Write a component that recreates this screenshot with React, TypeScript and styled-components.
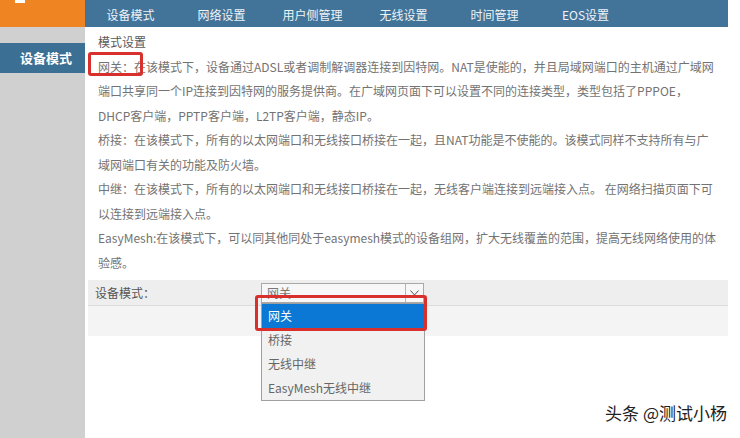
import styled, { createGlobalStyle } from 'styled-components';

const Global = createGlobalStyle`
  html, body {
    margin: 0;
    padding: 0;
    background: #fff;
  }
  body {
    font-family: "Noto Sans CJK SC", "Noto Sans", sans-serif;
  }
`;

const Page = styled.div`
  display: flex;
  height: 438px;
  overflow: hidden;
  position: relative;
  width: 740px;
`;

const Sidebar = styled.aside`
  background: #d0d0d0;
  display: flex;
  flex: 0 0 85px;
  flex-direction: column;
`;

const Logo = styled.div`
  background: #ef8522;
  height: 27px;
  position: relative;
`;

const LogoMark = styled.span`
  background: #fff;
  display: block;
  height: 3px;
  left: 15px;
  position: absolute;
  top: 0;
  width: 10px;
`;

const MenuItem = styled.div`
  background: #3c6f94;
  color: #fff;
  font-size: 13px;
  font-weight: 700;
  height: 30px;
  line-height: 30px;
  margin-top: 16px;
  padding-right: 13px;
  text-align: right;
`;

const Main = styled.main`
  display: flex;
  flex: 1;
  flex-direction: column;
`;

const NavBar = styled.nav`
  background: #42749a;
  display: flex;
  height: 27px;
  width: 643px;
`;

const Tab = styled.div`
  color: #eef3f7;
  flex: 0 0 91px;
  font-size: 12px;
  line-height: 30px;
  text-align: center;
`;

const Content = styled.section`
  color: #737373;
  font-size: 12px;
  line-height: 24.5px;
  padding: 3px 0 0 13px;
  width: 619px;
`;

const Title = styled.div`
  color: #5a5a5a;
`;

const Para = styled.p`
  margin: 0;
`;

const Marked = styled.span`
  position: relative;

  &::after {
    border: 3px solid #d8302c;
    border-radius: 3px;
    bottom: -1px;
    content: '';
    left: -10px;
    position: absolute;
    right: -9px;
    top: -6px;
  }
`;

const Form = styled.div`
  display: flex;
  flex-direction: column;
  margin: 5px 12px 0 3px;
`;

const Row = styled.div<{ $tone: string; $h: number }>`
  align-items: center;
  background: ${(p) => p.$tone};
  display: flex;
  height: ${(p) => p.$h}px;
  & + & {
    border-top: 1px solid #dcdcdc;
  }
`;

const Label = styled.div`
  color: #555;
  flex: 0 0 166px;
  font-size: 12px;
  padding-left: 7px;
`;

const SelectWrap = styled.div`
  position: relative;
`;

const Select = styled.div`
  align-items: center;
  background: #f7f7f7;
  border: 1px solid #a9a9a9;
  box-sizing: border-box;
  color: #777;
  display: flex;
  font-size: 12px;
  height: 20px;
  justify-content: space-between;
  padding-left: 5px;
  width: 163px;
`;

const Arrow = styled.span`
  align-items: center;
  border-left: 1px solid #b5b5b5;
  display: flex;
  height: 18px;
  justify-content: center;
  width: 17px;
`;

const List = styled.ul`
  background: #f1f1f1;
  border: 1px solid #a0a0a0;
  box-sizing: border-box;
  left: 0;
  list-style: none;
  margin: 0;
  padding: 0;
  position: absolute;
  top: 20px;
  width: 164px;
  z-index: 2;
`;

const Option = styled.li<{ $active?: boolean }>`
  background: ${(p) => (p.$active ? '#0a78d4' : 'transparent')};
  color: ${(p) => (p.$active ? '#fff' : '#666')};
  font-size: 12px;
  height: 24px;
  line-height: 24px;
  padding-left: 6px;
  position: relative;

  ${(p) =>
    p.$active &&
    `&::after {
      border: 3px solid #d8302c;
      border-radius: 3px;
      bottom: -3px;
      content: '';
      left: -7px;
      position: absolute;
      right: -3px;
      top: -9px;
    }`}
`;

const Watermark = styled.div`
  bottom: 13px;
  color: #222;
  font-size: 17px;
  position: absolute;
  right: 13px;
  text-shadow: 0 0 2px #fff, 1px 1px 0 #fff;
`;

const tabs = ['设备模式', '网络设置', '用户侧管理', '无线设置', '时间管理', 'EOS设置'];
const modes = ['网关', '桥接', '无线中继', 'EasyMesh无线中继'];

export default function App() {
  return (
    <Page>
      <Global />
      <Sidebar>
        <Logo>
          <LogoMark />
        </Logo>
        <MenuItem>设备模式</MenuItem>
      </Sidebar>
      <Main>
        <NavBar>
          {tabs.map((t) => (
            <Tab key={t}>{t}</Tab>
          ))}
        </NavBar>
        <Content>
          <Title>模式设置</Title>
          <Para>
            <Marked>网关：</Marked>在该模式下，设备通过ADSL或者调制解调器连接到因特网。NAT是使能的，并且局域网端口的主机通过广域网端口共享同一个IP连接到因特网的服务提供商。在广域网页面下可以设置不同的连接类型，类型包括了PPPOE，DHCP客户端，PPTP客户端，L2TP客户端，静态IP。
          </Para>
          <Para>
            桥接：在该模式下，所有的以太网端口和无线接口桥接在一起，且NAT功能是不使能的。该模式同样不支持所有与广域网端口有关的功能及防火墙。
          </Para>
          <Para>
            中继：在该模式下，所有的以太网端口和无线接口桥接在一起，无线客户端连接到远端接入点。 在网络扫描页面下可以连接到远端接入点。
          </Para>
          <Para>
            EasyMesh:在该模式下，可以同其他同处于easymesh模式的设备组网，扩大无线覆盖的范围，提高无线网络使用的体验感。
          </Para>
        </Content>
        <Form>
          <Row $tone="#eeeeee" $h={25}>
            <Label>设备模式：</Label>
            <SelectWrap>
              <Select>
                网关
                <Arrow>
                  <svg width="9" height="6" viewBox="0 0 9 6">
                    <path d="M0.5 0.5 L4.5 5 L8.5 0.5" fill="none" stroke="#555" strokeWidth="1" />
                  </svg>
                </Arrow>
              </Select>
              <List>
                {modes.map((m, i) => (
                  <Option key={m} $active={i === 0}>
                    {m}
                  </Option>
                ))}
              </List>
            </SelectWrap>
          </Row>
          <Row $tone="#f4f4f4" $h={30} />
        </Form>
      </Main>
      <Watermark>头条 @测试小杨</Watermark>
    </Page>
  );
}
